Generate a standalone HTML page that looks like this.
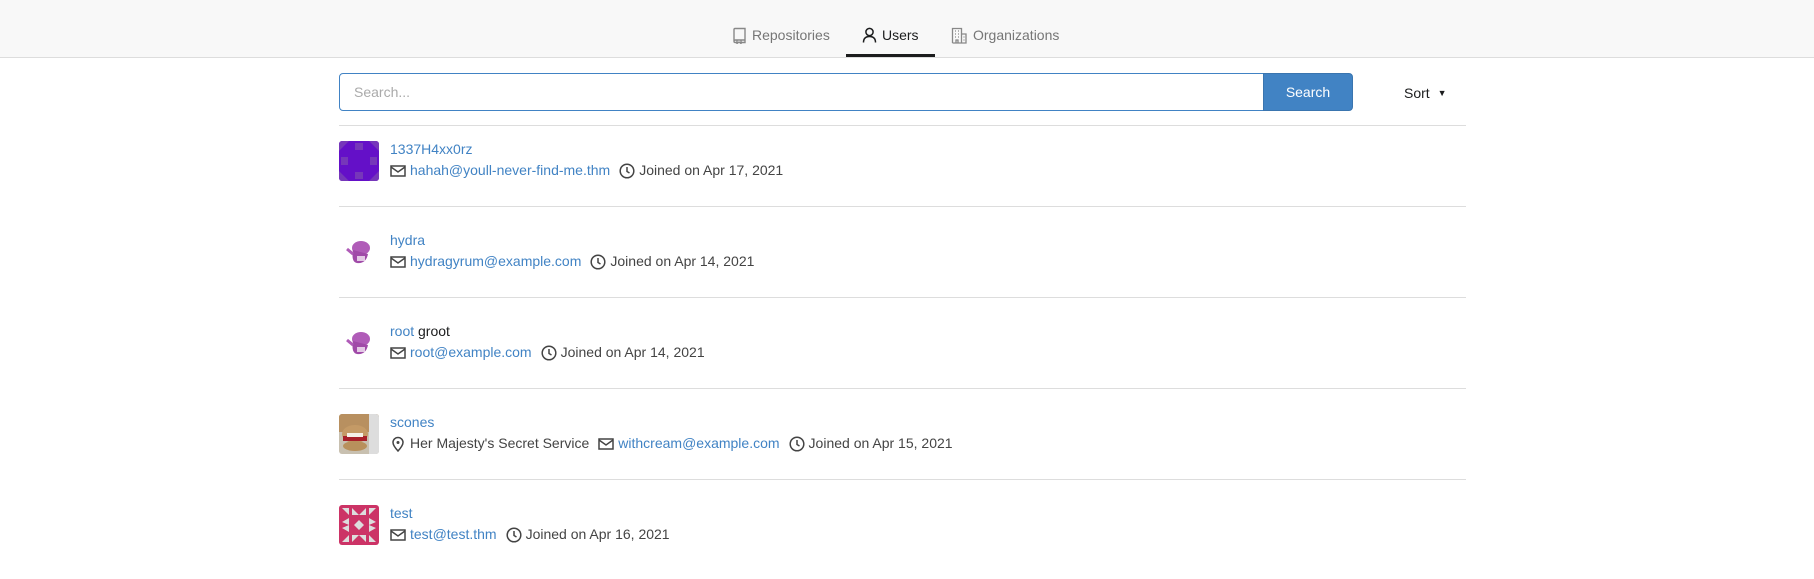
<!DOCTYPE html>
<html><head><meta charset="utf-8"><style>
*{box-sizing:border-box;margin:0;padding:0}
body{width:1814px;height:579px;background:#fff;font-family:"Liberation Sans",sans-serif;font-size:14px;color:#333;position:relative;overflow:hidden}
.hdr{position:absolute;left:0;top:0;width:1814px;height:58px;background:#f8f8f8;border-bottom:1px solid #ddd}
.tab{position:absolute;top:25px;height:20px;line-height:20px;color:#767676;display:flex;align-items:center;gap:5px;font-size:14px}
.tab svg{display:block}
.ul{position:absolute;left:846px;top:54px;width:89px;height:3px;background:#1b1c1d}
.search{position:absolute;left:339px;top:73px;width:925px;height:38px;border:1px solid #4183c4;border-radius:4px 0 0 4px;color:#aaa;padding-left:14px;line-height:36px}
.btn{position:absolute;left:1263px;top:73px;width:90px;height:38px;background:#4183c4;border:1px solid #3a75af;border-radius:0 4px 4px 0;color:#fff;text-align:center;line-height:36px}
.sort{position:absolute;left:1404px;top:85px;color:#1b1c1d;line-height:16px}
.hr{position:absolute;left:339px;width:1127px;height:1px;background:#ddd}
.row{position:absolute;left:339px;height:40px}
.av{position:absolute;left:0;top:0;width:40px;height:40px;border-radius:3px;overflow:hidden}
.name{position:absolute;left:51px;top:0;line-height:16px;white-space:nowrap;color:#4183c4}
.name b{font-weight:normal;color:#1b1c1d}
.det{position:absolute;left:51px;top:21px;line-height:17px;white-space:nowrap;display:flex;align-items:center;color:#444}
.det svg{margin-right:4px}
.det .g{margin-right:9px}
a{color:#4183c4;text-decoration:none}
</style></head><body>
<div class="hdr">
 <div class="tab" style="left:732px"><svg width="15" height="17" viewBox="0 0 15 17" fill="none" stroke="#888" stroke-width="1.4"><path d="M2 14V2.5Q2 1.5 3 1.5H13V13H3.5Q2 13 2 14.5Q2 15.5 3.5 15.5H5M9 15.5H13V13M5 13V16.5L7 15L9 16.5V13"/></svg>Repositories</div>
 <div class="tab" style="left:862px;color:#1b1c1d"><svg width="15" height="16" viewBox="0 0 15 16" fill="none" stroke="#1b1c1d" stroke-width="1.5"><circle cx="7.5" cy="5" r="3.6"/><path d="M1.5 15.5Q1.5 9.5 7.5 9.5Q13.5 9.5 13.5 15.5"/></svg>Users</div>
 <div class="tab" style="left:951px"><svg width="17" height="17" viewBox="0 0 17 17" fill="none" stroke="#888" stroke-width="1.3"><path d="M1.5 16V1.5H10.5V16H1.5M10.5 7H15V16H10.5M4 4h1M7 4h1M4 7h1M7 7h1M4 10h1M7 10h1M5 16V13H7V16M12.5 10h1M12.5 13h1"/></svg>Organizations</div>
 <div class="ul"></div>
</div>
<div class="search">Search...</div>
<div class="btn">Search</div>
<div class="sort">Sort <span style="font-size:9px;margin-left:4px;position:relative;top:-2px">▼</span></div>
<div class="hr" style="top:125px"></div>
<div class="hr" style="top:206px"></div>
<div class="hr" style="top:297px"></div>
<div class="hr" style="top:388px"></div>
<div class="hr" style="top:479px"></div>

<svg width="0" height="0" style="position:absolute"><defs>
<g id="mail"><rect x="1" y="3" width="14" height="10" fill="none" stroke="#444" stroke-width="1.5"/><path d="M1 4L8 9L15 4" fill="none" stroke="#444" stroke-width="1.5"/></g>
<g id="clk"><circle cx="8" cy="8" r="6.8" fill="none" stroke="#444" stroke-width="1.5"/><path d="M8 4V8.5L10.5 10" fill="none" stroke="#444" stroke-width="1.5"/></g>
<g id="pin"><path d="M8 15Q3 9.5 3 6.5A5 5 0 0 1 13 6.5Q13 9.5 8 15Z" fill="none" stroke="#444" stroke-width="1.5"/><circle cx="8" cy="6.5" r="1.5" fill="#444"/></g>
</defs></svg>

<div class="row" style="top:141px">
 <div class="av" style="background:#6410c8"><svg width="40" height="40"><g fill="#7a3fb8" opacity=".85"><rect x="16" y="2" width="8" height="7"/><rect x="16" y="31" width="8" height="7"/><rect x="2" y="16" width="7" height="8"/><rect x="31" y="16" width="7" height="8"/><path d="M0 0H10L0 10Z M40 0H30L40 10Z M0 40H10L0 30Z M40 40H30L40 30Z"/></g></svg></div>
 <div class="name">1337H4xx0rz</div>
 <div class="det"><svg width="16" height="16"><use href="#mail"/></svg><a class="g" href="#">hahah@youll-never-find-me.thm</a><svg width="16" height="16"><use href="#clk"/></svg>Joined on Apr 17, 2021</div>
</div>
<div class="row" style="top:232px">
 <div class="av"><svg width="40" height="40"><ellipse cx="22" cy="16" rx="9" ry="7" fill="#b05cb8"/><path d="M14 18Q12 30 18 31Q27 32 29 22Z" fill="#a04aa8"/><path d="M18 24h8v5h-8z" fill="#fff" opacity=".7"/><path d="M8 17L14 22" stroke="#b05cb8" stroke-width="3"/></svg></div>
 <div class="name">hydra</div>
 <div class="det"><svg width="16" height="16"><use href="#mail"/></svg><a class="g" href="#">hydragyrum@example.com</a><svg width="16" height="16"><use href="#clk"/></svg>Joined on Apr 14, 2021</div>
</div>
<div class="row" style="top:323px">
 <div class="av"><svg width="40" height="40"><ellipse cx="22" cy="16" rx="9" ry="7" fill="#b05cb8"/><path d="M14 18Q12 30 18 31Q27 32 29 22Z" fill="#a04aa8"/><path d="M18 24h8v5h-8z" fill="#fff" opacity=".7"/><path d="M8 17L14 22" stroke="#b05cb8" stroke-width="3"/></svg></div>
 <div class="name">root <b>groot</b></div>
 <div class="det"><svg width="16" height="16"><use href="#mail"/></svg><a class="g" href="#">root@example.com</a><svg width="16" height="16"><use href="#clk"/></svg>Joined on Apr 14, 2021</div>
</div>
<div class="row" style="top:414px">
 <div class="av" style="background:#c8c0b0"><svg width="40" height="40"><rect width="40" height="18" fill="#b89060"/><ellipse cx="16" cy="20" rx="13" ry="9" fill="#c49a66"/><rect x="4" y="22" width="24" height="5" fill="#a8202a"/><rect x="8" y="19" width="16" height="4" fill="#f4f0e8"/><ellipse cx="16" cy="32" rx="12" ry="5" fill="#b8905c"/><rect x="30" y="0" width="10" height="40" fill="#ddd"/></svg></div>
 <div class="name">scones</div>
 <div class="det"><svg width="16" height="16"><use href="#pin"/></svg><span class="g">Her Majesty's Secret Service</span><svg width="16" height="16"><use href="#mail"/></svg><a class="g" href="#">withcream@example.com</a><svg width="16" height="16"><use href="#clk"/></svg>Joined on Apr 15, 2021</div>
</div>
<div class="row" style="top:505px">
 <div class="av" style="background:#cc3366"><svg width="40" height="40" fill="#ddd"><path d="M3 3h7v7zM13 3l7 7h-7zM27 3l-7 7h7zM37 3h-7v7zM3 17l7-4v7zM37 17l-7-4v7zM20 15l5 5-5 5-5-5zM3 37h7v-7zM13 37l7-7h-7zM27 37l-7-7h7zM37 37h-7v-7zM3 23l7 4v-7zM37 23l-7 4v-7z"/></svg></div>
 <div class="name">test</div>
 <div class="det"><svg width="16" height="16"><use href="#mail"/></svg><a class="g" href="#">test@test.thm</a><svg width="16" height="16"><use href="#clk"/></svg>Joined on Apr 16, 2021</div>
</div>
</body></html>
